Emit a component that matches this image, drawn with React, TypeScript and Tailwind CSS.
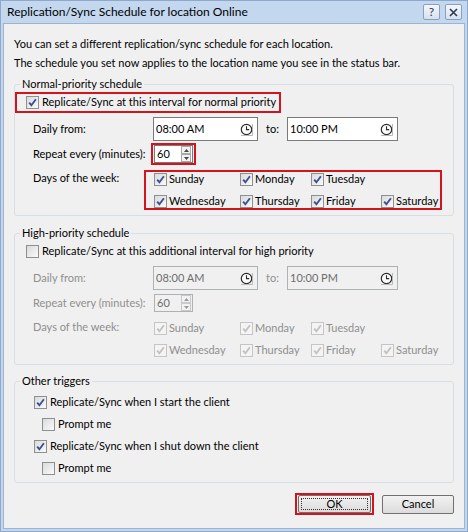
import React from "react";

const RED = "border-[#d2141c]";
const NONE = "border-transparent";

function Check({ checked = false, disabled = false }: { checked?: boolean; disabled?: boolean }) {
  return (
    <span
      className={`flex h-[13px] w-[13px] shrink-0 items-center justify-center border ${
        disabled
          ? "border-[#c5c5c5] bg-[#f4f4f4]"
          : "border-[#8e8f8f] bg-gradient-to-br from-[#d9dadc] to-[#fafafa]"
      }`}
    >
      {checked && (
        <svg width="11" height="11" viewBox="0 0 11 11">
          <path
            d="M2.2 5.6 L4.4 8.3 L8.9 2.2"
            fill="none"
            stroke={disabled ? "#c2c2c2" : "#3d5192"}
            strokeWidth="1.9"
          />
        </svg>
      )}
    </span>
  );
}

function Clock() {
  return (
    <svg width="13" height="13" viewBox="0 0 13 13" className="shrink-0">
      <circle cx="6.5" cy="6.5" r="5.2" fill="#fbfbfb" stroke="#2b2b2b" strokeWidth="1.2" />
      <path d="M6.5 3.3 V6.6 H9.2" fill="none" stroke="#2b2b2b" strokeWidth="1.1" />
      <path d="M12.5 1 V12.5 H1" fill="none" stroke="#b9b9b9" strokeWidth="1" />
    </svg>
  );
}

function TimeBox({ value, disabled, w }: { value: string; disabled?: boolean; w: string }) {
  return (
    <div
      className={`flex h-[24px] items-center justify-between border pl-[2px] pr-[4px] ${w} ${
        disabled ? "border-[#adb2b5] bg-[#f0f0f0] text-[#6d6d6d]" : "border-[#7a7a7a] bg-white"
      }`}
    >
      <span>{value}</span>
      <Clock />
    </div>
  );
}

function Arrow({ up, disabled }: { up?: boolean; disabled?: boolean }) {
  return (
    <span
      className={`flex h-[8px] w-[10px] items-center justify-center border bg-[#f2f2f2] ${
        disabled ? "border-[#c9c9c9]" : "border-[#a8a8a8]"
      }`}
    >
      <svg width="5" height="3" viewBox="0 0 5 3">
        <path d={up ? "M0 3 L2.5 0 L5 3 Z" : "M0 0 L2.5 3 L5 0 Z"} fill={disabled ? "#9a9a9a" : "#444"} />
      </svg>
    </span>
  );
}

function Spin({ value, disabled }: { value: string; disabled?: boolean }) {
  return (
    <div
      className={`flex h-[18px] w-[39px] items-center justify-between border pl-[2px] pr-[1px] ${
        disabled ? "border-[#adb2b5] bg-[#f0f0f0] text-[#6d6d6d]" : "border-[#7a7a7a] bg-white"
      }`}
    >
      <span>{value}</span>
      <div className="flex flex-col">
        <Arrow up disabled={disabled} />
        <Arrow disabled={disabled} />
      </div>
    </div>
  );
}

function Day({ name, disabled }: { name: string; disabled?: boolean }) {
  return (
    <div className="flex h-[14px] items-center gap-[2px]">
      <Check checked disabled={disabled} />
      <span>{name}</span>
    </div>
  );
}

function Schedule({
  title,
  check,
  disabled,
  marked,
}: {
  title: string;
  check: string;
  disabled?: boolean;
  marked?: boolean;
}) {
  const red = marked ? RED : NONE;
  const muted = disabled ? "text-[#8f8f8f]" : "";
  return (
    <fieldset className="mx-[10px] rounded-[3px] border border-[#d5dfe5] pb-[5px]">
      <legend className="ml-[5px] px-[2px] leading-[16px]">{title}</legend>
      <div
        className={`flex h-[21px] items-center gap-[3px] whitespace-nowrap border-2 pl-[9px] ${red} ${
          marked ? "w-[266px]" : "w-max"
        }`}
      >
        <Check checked={!disabled} />
        <span>{check}</span>
      </div>
      <div className={`mt-[4px] flex h-[24px] items-center pl-[18px] ${muted}`}>
        <span className="w-[120px]">Daily from:</span>
        <TimeBox value="08:00 AM" disabled={disabled} w="w-[105px]" />
        <span className="ml-[8px] w-[21px]">to:</span>
        <TimeBox value="10:00 PM" disabled={disabled} w="w-[111px]" />
      </div>
      <div className={`mt-[2px] flex h-[22px] items-center pl-[18px] ${muted}`}>
        <span className="w-[118px]">Repeat every (minutes):</span>
        <div className={`flex h-[22px] w-[45px] items-center justify-center border-2 ${red}`}>
          <Spin value="60" disabled={disabled} />
        </div>
      </div>
      <div className={`mt-[5px] flex items-start pl-[18px] ${muted}`}>
        <span className="w-[111px] leading-[16px]">Days of the week:</span>
        <div
          className={`grid h-[40px] w-[298px] grid-cols-[86px_71px_70px_auto] content-center gap-y-[8px] border-2 pl-[8px] ${red}`}
        >
          <Day name="Sunday" disabled={disabled} />
          <Day name="Monday" disabled={disabled} />
          <Day name="Tuesday" disabled={disabled} />
          <span />
          <Day name="Wednesday" disabled={disabled} />
          <Day name="Thursday" disabled={disabled} />
          <Day name="Friday" disabled={disabled} />
          <Day name="Saturday" disabled={disabled} />
        </div>
      </div>
    </fieldset>
  );
}

function Trigger({ label, checked, indent }: { label: string; checked?: boolean; indent: string }) {
  return (
    <div className={`flex h-[22px] items-center gap-[3px] ${indent}`}>
      <Check checked={checked} />
      <span>{label}</span>
    </div>
  );
}

function TitleButton({ children }: { children: React.ReactNode }) {
  return (
    <span className="flex h-[16px] w-[17px] items-center justify-center rounded-[2px] border border-[#8a9fbd] bg-gradient-to-b from-[#f4f7fb] to-[#d6e1ef] text-[12px] leading-none text-[#2c3a50]">
      {children}
    </span>
  );
}

export default function App() {
  return (
    <div className="flex h-[532px] w-[468px] flex-col border border-[#8ea8cb] bg-[#c3d7ef] px-[2px] pb-[2px] font-['Lato',sans-serif] text-[11px] text-black">
      <div className="flex h-[22px] shrink-0 items-center justify-between pl-[4px] pr-[3px]">
        <span className="text-[12px]">Replication/Sync Schedule for location Online</span>
        <div className="flex items-center gap-[5px]">
          <TitleButton>?</TitleButton>
          <TitleButton>
            <svg width="9" height="9" viewBox="0 0 9 9">
              <path d="M1 1 L8 8 M8 1 L1 8" stroke="#2c3a50" strokeWidth="1.6" />
            </svg>
          </TitleButton>
        </div>
      </div>
      <div className="flex-1 border border-[#9db3cf] bg-[#f0f0f0] pt-[10px]">
        <div className="pl-[10px] leading-[19px]">
          <p>You can set a different replication/sync schedule for each location.</p>
          <p>The schedule you set now applies to the location name you see in the status bar.</p>
        </div>
        <div className="mt-[4px]">
          <Schedule
            title="Normal-priority schedule"
            check="Replicate/Sync at this interval for normal priority"
            marked
          />
        </div>
        <div className="mt-[9px]">
          <Schedule
            title="High-priority schedule"
            check="Replicate/Sync at this additional interval for high priority"
            disabled
          />
        </div>
        <fieldset className="mx-[10px] mt-[8px] rounded-[3px] border border-[#d5dfe5] pb-[3px] pt-[2px]">
          <legend className="ml-[5px] px-[2px] leading-[16px]">Other triggers</legend>
          <Trigger label="Replicate/Sync when I start the client" checked indent="pl-[19px]" />
          <Trigger label="Prompt me" indent="pl-[27px]" />
          <Trigger label="Replicate/Sync when I shut down the client" checked indent="pl-[19px]" />
          <Trigger label="Prompt me" indent="pl-[27px]" />
        </fieldset>
        <div className="mt-[10px] flex items-center justify-end gap-[8px] pr-[10px]">
          <div className={`flex h-[22px] w-[79px] items-center justify-center border-2 ${RED}`}>
            <button className="flex h-[18px] w-[73px] items-center justify-center rounded-[2px] border border-[#707070] bg-gradient-to-b from-[#f2f2f2] to-[#dcdcdc] p-[2px]">
              <span className="flex h-full w-full items-center justify-center border border-dotted border-[#333]">
                OK
              </span>
            </button>
          </div>
          <button className="flex h-[19px] w-[72px] items-center justify-center rounded-[2px] border border-[#707070] bg-gradient-to-b from-[#f2f2f2] to-[#dcdcdc]">
            Cancel
          </button>
        </div>
      </div>
    </div>
  );
}
